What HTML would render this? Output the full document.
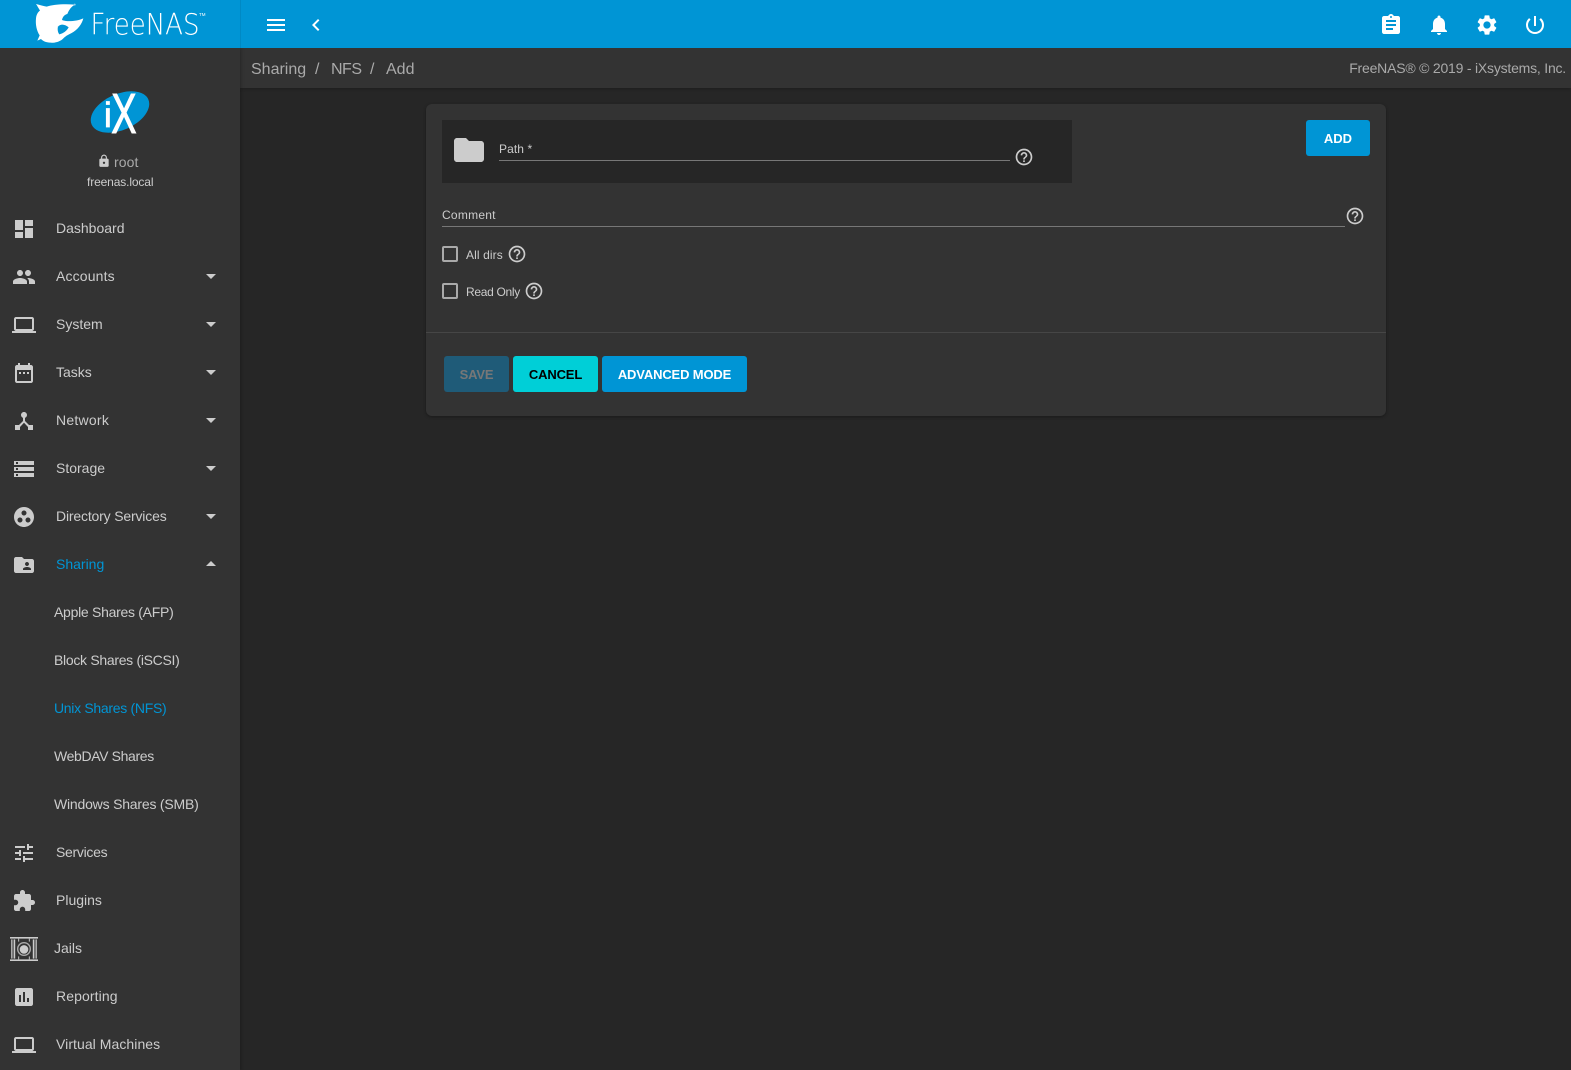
<!DOCTYPE html>
<html><head><meta charset="utf-8"><title>FreeNAS</title>
<style>
html,body{margin:0;padding:0;background:#262626}
body{width:1571px;height:1070px;position:relative;overflow:hidden;font-family:"Liberation Sans",Arial,sans-serif;color:#ccc;font-size:14px}
.a{position:absolute}
.t{position:absolute;white-space:nowrap;line-height:20px}
svg{position:absolute;display:block;fill:#ccc}
#top{left:0;top:0;width:1571px;height:48px;background:#0095d5}
#top svg{fill:#fff}
#side{left:0;top:48px;width:240px;height:1022px;background:#333;box-shadow:1px 0 3px rgba(0,0,0,.25)}
#crumb{left:240px;top:48px;width:1331px;height:40px;background:#333;box-shadow:0 1px 3px rgba(0,0,0,.2)}
#card{left:426px;top:104px;width:960px;height:312px;background:#333;border-radius:6px;box-shadow:0 1px 3px rgba(0,0,0,.35)}
.btn{position:absolute;top:356px;height:36px;line-height:37px;text-align:center;border-radius:3px;font-size:13px;font-weight:bold;letter-spacing:-.15px}
.cb{position:absolute;left:442px;width:12px;height:12px;border:2px solid #aaa;border-radius:2px}
.blue{color:#0095d5}
</style></head><body>
<div class="a" id="crumb"></div>
<div class="a" id="side"></div>
<div class="a" id="top">
<div class="a" style="left:240px;top:0;width:1px;height:48px;background:#0089c4"></div>
<svg style="left:0;top:0" width="240" height="48" viewBox="0 0 240 48">
<g transform="translate(30,0) scale(.3333)">
<path d="M18 12 C30 15 40 18 50 20 C68 14 100 11 135 14 C124 20 118 28 112 42 C104 44 98 50 96 60 C110 66 140 64 160 55 C156 72 142 90 125 99 C114 104 104 110 97 118 C86 126 74 129 60 128 C48 127 40 124 33 117 L22 122 L29 106 C20 92 16 74 18 55 C19 44 24 36 30 32 C26 25 22 18 18 12Z"/>
<path fill="#0095d5" d="M84 80 C92 70 106 73 116 82 C110 93 100 100 88 103 C83 97 82 87 84 80Z"/>
<circle cx="134" cy="14" r="3" fill="#8fd0ee"/>
</g>
<text x="90.5" y="34.5" font-family="DejaVu Sans" font-weight="200" font-size="29" textLength="109" lengthAdjust="spacingAndGlyphs" fill="#fff">FreeNAS</text>
<text x="199" y="16" font-size="4.5" fill="#fff">TM</text>
</svg>
<svg style="left:264px;top:13px" width="24" height="24" viewBox="0 0 24 24"><path d="M3 18h18v-2H3v2zm0-5h18v-2H3v2zm0-7v2h18V6H3z"/></svg>
<svg style="left:304px;top:13px" width="24" height="24" viewBox="0 0 24 24"><path d="M15.41 7.41L14 6l-6 6 6 6 1.41-1.41L10.83 12z"/></svg>
<svg style="left:1379px;top:13px" width="24" height="24" viewBox="0 0 24 24"><path d="M19 3h-4.18C14.4 1.84 13.3 1 12 1c-1.3 0-2.4.84-2.82 2H5c-1.1 0-2 .9-2 2v14c0 1.1.9 2 2 2h14c1.1 0 2-.9 2-2V5c0-1.1-.9-2-2-2zm-7 0c.55 0 1 .45 1 1s-.45 1-1 1-1-.45-1-1 .45-1 1-1zm2 14H7v-2h7v2zm3-4H7v-2h10v2zm0-4H7V7h10v2z"/></svg>
<svg style="left:1427px;top:13px" width="24" height="24" viewBox="0 0 24 24"><path d="M12 22c1.1 0 2-.9 2-2h-4c0 1.1.89 2 2 2zm6-6v-5c0-3.07-1.64-5.64-4.5-6.32V4c0-.83-.67-1.5-1.5-1.5s-1.5.67-1.5 1.5v.68C7.63 5.36 6 7.92 6 11v5l-2 2v1h16v-1l-2-2z"/></svg>
<svg style="left:1475px;top:13px" width="24" height="24" viewBox="0 0 24 24"><path d="M19.14 12.94c.04-.3.06-.61.06-.94 0-.32-.02-.64-.07-.94l2.03-1.58c.18-.14.23-.41.12-.61l-1.92-3.32c-.12-.22-.37-.29-.59-.22l-2.39.96c-.5-.38-1.03-.7-1.62-.94l-.36-2.54c-.04-.24-.24-.41-.48-.41h-3.84c-.24 0-.43.17-.47.41l-.36 2.54c-.59.24-1.13.57-1.62.94l-2.39-.96c-.22-.08-.47 0-.59.22L2.74 8.87c-.12.21-.08.47.12.61l2.03 1.58c-.05.3-.09.63-.09.94s.02.64.07.94l-2.03 1.58c-.18.14-.23.41-.12.61l1.92 3.32c.12.22.37.29.59.22l2.39-.96c.5.38 1.03.7 1.62.94l.36 2.54c.05.24.24.41.48.41h3.84c.24 0 .44-.17.47-.41l.36-2.54c.59-.24 1.13-.56 1.62-.94l2.39.96c.22.08.47 0 .59-.22l1.92-3.32c.12-.22.07-.47-.12-.61l-2.01-1.58zM12 15.6c-1.98 0-3.6-1.62-3.6-3.6s1.62-3.6 3.6-3.6 3.6 1.62 3.6 3.6-1.62 3.6-3.6 3.6z"/></svg>
<svg style="left:1523px;top:13px" width="24" height="24" viewBox="0 0 24 24"><path d="M13 3h-2v10h2V3zm4.83 2.17l-1.42 1.42C17.99 7.86 19 9.81 19 12c0 3.87-3.13 7-7 7s-7-3.13-7-7c0-2.19 1.01-4.14 2.58-5.42L6.17 5.17C4.23 6.82 3 9.26 3 12c0 4.97 4.03 9 9 9s9-4.03 9-9c0-2.74-1.23-5.18-3.17-6.83z"/></svg>
</div>

<svg style="left:85px;top:85px" width="70" height="52" viewBox="85 85 70 52">
<ellipse cx="120" cy="112" rx="31" ry="18" transform="rotate(-24 120 112)" fill="#0095d5"/>
<text x="104" y="127" font-size="35" fill="#fff" stroke="#fff" stroke-width=".8">i</text>
<text transform="translate(111.3,133) scale(1,1.5)" font-size="38" fill="#fff" stroke="#fff" stroke-width=".7">X</text>
</svg>
<svg style="left:97px;top:154px" width="14" height="14" viewBox="0 0 24 24" fill="#bbb"><path d="M18 8h-1V6c0-2.76-2.24-5-5-5S7 3.24 7 6v2H6c-1.1 0-2 .9-2 2v10c0 1.1.9 2 2 2h12c1.1 0 2-.9 2-2V10c0-1.1-.9-2-2-2zm-6 9c-1.1 0-2-.9-2-2s.9-2 2-2 2 .9 2 2-.9 2-2 2zm3.1-9H8.9V6c0-1.71 1.39-3.1 3.1-3.1 1.71 0 3.1 1.39 3.1 3.1v2z"/></svg>
<div class="t" style="left:114px;top:152px;color:#aaa;letter-spacing:.1px">root</div>
<div class="t" style="left:87px;top:172px;font-size:12px;letter-spacing:-.13px">freenas.local</div>

<!-- nav -->
<svg style="left:12px;top:217px" width="24" height="24" viewBox="0 0 24 24"><path d="M3 13h8V3H3v10zm0 8h8v-6H3v6zm10 0h8V11h-8v10zm0-18v6h8V3h-8z"/></svg>
<div class="t" style="left:56px;top:218px">Dashboard</div>
<svg style="left:12px;top:265px" width="24" height="24" viewBox="0 0 24 24"><path d="M16 11c1.66 0 2.99-1.34 2.99-3S17.66 5 16 5c-1.66 0-3 1.34-3 3s1.34 3 3 3zm-8 0c1.66 0 2.99-1.34 2.99-3S9.66 5 8 5C6.34 5 5 6.34 5 8s1.34 3 3 3zm0 2c-2.33 0-7 1.17-7 3.5V19h14v-2.5c0-2.33-4.67-3.5-7-3.5zm8 0c-.29 0-.62.02-.97.05 1.16.84 1.97 1.97 1.97 3.45V19h6v-2.5c0-2.33-4.67-3.5-7-3.5z"/></svg>
<div class="t" style="left:56px;top:266px;letter-spacing:.15px">Accounts</div>
<svg style="left:206px;top:274px" width="10" height="5" viewBox="0 0 10 5"><path d="M0 0h10L5 5z"/></svg>
<svg style="left:12px;top:313px" width="24" height="24" viewBox="0 0 24 24"><path d="M20 18c1.1 0 1.99-.9 1.99-2L22 6c0-1.1-.9-2-2-2H4c-1.1 0-2 .9-2 2v10c0 1.1.9 2 2 2H0v2h24v-2h-4zM4 6h16v10H4V6z"/></svg>
<div class="t" style="left:56px;top:314px">System</div>
<svg style="left:206px;top:322px" width="10" height="5" viewBox="0 0 10 5"><path d="M0 0h10L5 5z"/></svg>
<svg style="left:12px;top:361px" width="24" height="24" viewBox="0 0 24 24"><path d="M9 11H7v2h2v-2zm4 0h-2v2h2v-2zm4 0h-2v2h2v-2zm2-7h-1V2h-2v2H8V2H6v2H5c-1.11 0-1.99.9-1.99 2L3 20c0 1.1.89 2 2 2h14c1.1 0 2-.9 2-2V6c0-1.1-.9-2-2-2zm0 16H5V9h14v11z"/></svg>
<div class="t" style="left:56px;top:362px">Tasks</div>
<svg style="left:206px;top:370px" width="10" height="5" viewBox="0 0 10 5"><path d="M0 0h10L5 5z"/></svg>
<svg style="left:12px;top:409px" width="24" height="24" viewBox="0 0 24 24"><path d="M17 16l-4-4V8.82C14.16 8.4 15 7.3 15 6c0-1.66-1.34-3-3-3S9 4.34 9 6c0 1.3.84 2.4 2 2.82V12l-4 4H3v5h5v-3.05l4-4.2 4 4.2V21h5v-5h-4z"/></svg>
<div class="t" style="left:56px;top:410px;letter-spacing:.25px">Network</div>
<svg style="left:206px;top:418px" width="10" height="5" viewBox="0 0 10 5"><path d="M0 0h10L5 5z"/></svg>
<svg style="left:12px;top:457px" width="24" height="24" viewBox="0 0 24 24"><path d="M2 20h20v-4H2v4zm2-3h2v2H4v-2zM2 4v4h20V4H2zm4 3H4V5h2v2zm-4 7h20v-4H2v4zm2-3h2v2H4v-2z"/></svg>
<div class="t" style="left:56px;top:458px">Storage</div>
<svg style="left:206px;top:466px" width="10" height="5" viewBox="0 0 10 5"><path d="M0 0h10L5 5z"/></svg>
<svg style="left:12px;top:505px" width="24" height="24" viewBox="0 0 24 24"><path d="M12 2C6.48 2 2 6.48 2 12s4.48 10 10 10 10-4.48 10-10S17.52 2 12 2zM8 17.5c-1.38 0-2.5-1.12-2.5-2.5s1.12-2.5 2.5-2.5 2.5 1.12 2.5 2.5-1.12 2.5-2.5 2.5zM9.5 8c0-1.38 1.12-2.5 2.5-2.5s2.5 1.12 2.5 2.5-1.12 2.5-2.5 2.5S9.5 9.38 9.5 8zm6.5 9.5c-1.38 0-2.5-1.12-2.5-2.5s1.12-2.5 2.5-2.5 2.5 1.12 2.5 2.5-1.12 2.5-2.5 2.5z"/></svg>
<div class="t" style="left:56px;top:506px;letter-spacing:-.17px">Directory Services</div>
<svg style="left:206px;top:514px" width="10" height="5" viewBox="0 0 10 5"><path d="M0 0h10L5 5z"/></svg>
<svg style="left:12px;top:553px" width="24" height="24" viewBox="0 0 24 24"><path d="M20 6h-8l-2-2H4c-1.1 0-1.99.9-1.99 2L2 18c0 1.1.9 2 2 2h16c1.1 0 2-.9 2-2V8c0-1.1-.9-2-2-2zm-5 3c1.1 0 2 .9 2 2s-.9 2-2 2-2-.9-2-2 .9-2 2-2zm4 8h-8v-1c0-1.33 2.67-2 4-2s4 .67 4 2v1z"/></svg>
<div class="t blue" style="left:56px;top:554px">Sharing</div>
<svg style="left:206px;top:561px" width="10" height="5" viewBox="0 0 10 5"><path d="M0 5h10L5 0z"/></svg>
<div class="t" style="left:54px;top:602px;letter-spacing:-.28px">Apple Shares (AFP)</div>
<div class="t" style="left:54px;top:650px;letter-spacing:-.3px">Block Shares (iSCSI)</div>
<div class="t blue" style="left:54px;top:698px;letter-spacing:-.3px">Unix Shares (NFS)</div>
<div class="t" style="left:54px;top:746px;letter-spacing:-.36px">WebDAV Shares</div>
<div class="t" style="left:54px;top:794px;letter-spacing:-.2px">Windows Shares (SMB)</div>
<svg style="left:12px;top:841px" width="24" height="24" viewBox="0 0 24 24"><path d="M3 17v2h6v-2H3zM3 5v2h10V5H3zm10 16v-2h8v-2h-8v-2h-2v6h2zM7 9v2H3v2h4v2h2V9H7zm14 4v-2H11v2h10zm-6-4h2V7h4V5h-4V3h-2v6z"/></svg>
<div class="t" style="left:56px;top:842px;letter-spacing:-.3px">Services</div>
<svg style="left:12px;top:889px" width="24" height="24" viewBox="0 0 24 24"><path d="M20.5 11H19V7c0-1.1-.9-2-2-2h-4V3.5C13 2.12 11.88 1 10.5 1S8 2.12 8 3.5V5H4c-1.1 0-1.99.9-1.99 2v3.8H3.5c1.49 0 2.7 1.21 2.7 2.7s-1.21 2.7-2.7 2.7H2V20c0 1.1.9 2 2 2h3.8v-1.5c0-1.49 1.21-2.7 2.7-2.7 1.49 0 2.7 1.21 2.7 2.7V22H17c1.1 0 2-.9 2-2v-4h1.5c1.38 0 2.5-1.12 2.5-2.5S21.88 11 20.5 11z"/></svg>
<div class="t" style="left:56px;top:890px">Plugins</div>
<svg style="left:10px;top:937px" width="28" height="24" viewBox="0 0 28 24">
<rect x="0" y="0" width="28" height="1.6"/><rect x="0" y="22.4" width="28" height="1.6"/>
<rect x="1" y="2.4" width="1.6" height="19.2" fill="#aaa"/><rect x="3.6" y="2.4" width="1.6" height="19.2"/>
<rect x="22.8" y="2.4" width="1.6" height="19.2"/><rect x="25.4" y="2.4" width="1.6" height="19.2" fill="#aaa"/>
<rect x="8" y="1.6" width="1.2" height="3" fill="#aaa"/><rect x="18.8" y="1.6" width="1.2" height="3" fill="#aaa"/>
<rect x="8" y="19.4" width="1.2" height="3" fill="#aaa"/><rect x="18.8" y="19.4" width="1.2" height="3" fill="#aaa"/>
<circle cx="14" cy="12" r="6.3" fill="none" stroke="#aaa" stroke-width="1.4"/><circle cx="14" cy="12.4" r="4.3"/>
</svg>
<div class="t" style="left:54px;top:938px">Jails</div>
<svg style="left:12px;top:985px" width="24" height="24" viewBox="0 0 24 24"><path d="M19 3H5c-1.1 0-2 .9-2 2v14c0 1.1.9 2 2 2h14c1.1 0 2-.9 2-2V5c0-1.1-.9-2-2-2zM9 17H7v-7h2v7zm4 0h-2V7h2v10zm4 0h-2v-4h2v4z"/></svg>
<div class="t" style="left:56px;top:986px;letter-spacing:.1px">Reporting</div>
<svg style="left:12px;top:1033px" width="24" height="24" viewBox="0 0 24 24"><path d="M20 18c1.1 0 1.99-.9 1.99-2L22 6c0-1.1-.9-2-2-2H4c-1.1 0-2 .9-2 2v10c0 1.1.9 2 2 2H0v2h24v-2h-4zM4 6h16v10H4V6z"/></svg>
<div class="t" style="left:56px;top:1034px;letter-spacing:.06px">Virtual Machines</div>

<!-- crumbs -->
<div class="t" style="left:251px;top:60px;font-size:16px;color:#aaa">Sharing</div>
<div class="t" style="left:315px;top:60px;font-size:16px;color:#aaa">/</div>
<div class="t" style="left:331px;top:60px;font-size:16px;color:#aaa;letter-spacing:-.5px">NFS</div>
<div class="t" style="left:370px;top:60px;font-size:16px;color:#aaa">/</div>
<div class="t" style="left:386px;top:60px;font-size:16px;color:#aaa">Add</div>
<div class="t" style="right:5px;top:58px;color:#aaa;letter-spacing:-.21px">FreeNAS® © 2019 - iXsystems, Inc.</div>

<!-- card -->
<div class="a" id="card"></div>
<div class="a" style="left:442px;top:120px;width:630px;height:63px;background:#262626"></div>
<svg style="left:451px;top:132px" width="36" height="36" viewBox="0 0 24 24"><path d="M10 4H4c-1.1 0-1.99.9-1.99 2L2 18c0 1.1.9 2 2 2h16c1.1 0 2-.9 2-2V8c0-1.1-.9-2-2-2h-8l-2-2z"/></svg>
<div class="t" style="left:499px;top:139px;font-size:12px;letter-spacing:.1px">Path *</div>
<div class="a" style="left:499px;top:160px;width:511px;height:1px;background:#777"></div>
<svg style="left:1014px;top:147px" width="20" height="20" viewBox="0 0 24 24"><path d="M11 18h2v-2h-2v2zm1-16C6.48 2 2 6.48 2 12s4.48 10 10 10 10-4.48 10-10S17.52 2 12 2zm0 18c-4.41 0-8-3.59-8-8s3.59-8 8-8 8 3.59 8 8-3.59 8-8 8zm0-14c-2.21 0-4 1.79-4 4h2c0-1.1.9-2 2-2s2 .9 2 2c0 2-3 1.75-3 5h2c0-2.25 3-2.5 3-5 0-2.21-1.79-4-4-4z"/></svg>
<div class="a" style="left:1306px;top:120px;width:64px;height:36px;line-height:37px;text-align:center;background:#0095d5;border-radius:3px;color:#fff;font-size:13px;font-weight:bold">ADD</div>
<div class="t" style="left:442px;top:205px;font-size:12px;letter-spacing:.25px">Comment</div>
<div class="a" style="left:442px;top:226px;width:903px;height:1px;background:#777"></div>
<svg style="left:1345px;top:206px" width="20" height="20" viewBox="0 0 24 24"><path d="M11 18h2v-2h-2v2zm1-16C6.48 2 2 6.48 2 12s4.48 10 10 10 10-4.48 10-10S17.52 2 12 2zm0 18c-4.41 0-8-3.59-8-8s3.59-8 8-8 8 3.59 8 8-3.59 8-8 8zm0-14c-2.21 0-4 1.79-4 4h2c0-1.1.9-2 2-2s2 .9 2 2c0 2-3 1.75-3 5h2c0-2.25 3-2.5 3-5 0-2.21-1.79-4-4-4z"/></svg>
<div class="cb" style="top:246px"></div>
<div class="t" style="left:466px;top:245px;font-size:12px;letter-spacing:.1px">All dirs</div>
<svg style="left:507px;top:244px" width="20" height="20" viewBox="0 0 24 24"><path d="M11 18h2v-2h-2v2zm1-16C6.48 2 2 6.48 2 12s4.48 10 10 10 10-4.48 10-10S17.52 2 12 2zm0 18c-4.41 0-8-3.59-8-8s3.59-8 8-8 8 3.59 8 8-3.59 8-8 8zm0-14c-2.21 0-4 1.79-4 4h2c0-1.1.9-2 2-2s2 .9 2 2c0 2-3 1.75-3 5h2c0-2.25 3-2.5 3-5 0-2.21-1.79-4-4-4z"/></svg>
<div class="cb" style="top:283px"></div>
<div class="t" style="left:466px;top:282px;font-size:12px;letter-spacing:-.3px">Read Only</div>
<svg style="left:524px;top:281px" width="20" height="20" viewBox="0 0 24 24"><path d="M11 18h2v-2h-2v2zm1-16C6.48 2 2 6.48 2 12s4.48 10 10 10 10-4.48 10-10S17.52 2 12 2zm0 18c-4.41 0-8-3.59-8-8s3.59-8 8-8 8 3.59 8 8-3.59 8-8 8zm0-14c-2.21 0-4 1.79-4 4h2c0-1.1.9-2 2-2s2 .9 2 2c0 2-3 1.75-3 5h2c0-2.25 3-2.5 3-5 0-2.21-1.79-4-4-4z"/></svg>
<div class="a" style="left:426px;top:332px;width:960px;height:1px;background:#464646"></div>
<div class="btn" style="left:444px;width:65px;background:#1f5b78;color:#777">SAVE</div>
<div class="btn" style="left:513px;width:85px;background:#00cfd7;color:#000">CANCEL</div>
<div class="btn" style="left:602px;width:145px;background:#0095d5;color:#fff">ADVANCED MODE</div>
</body></html>
